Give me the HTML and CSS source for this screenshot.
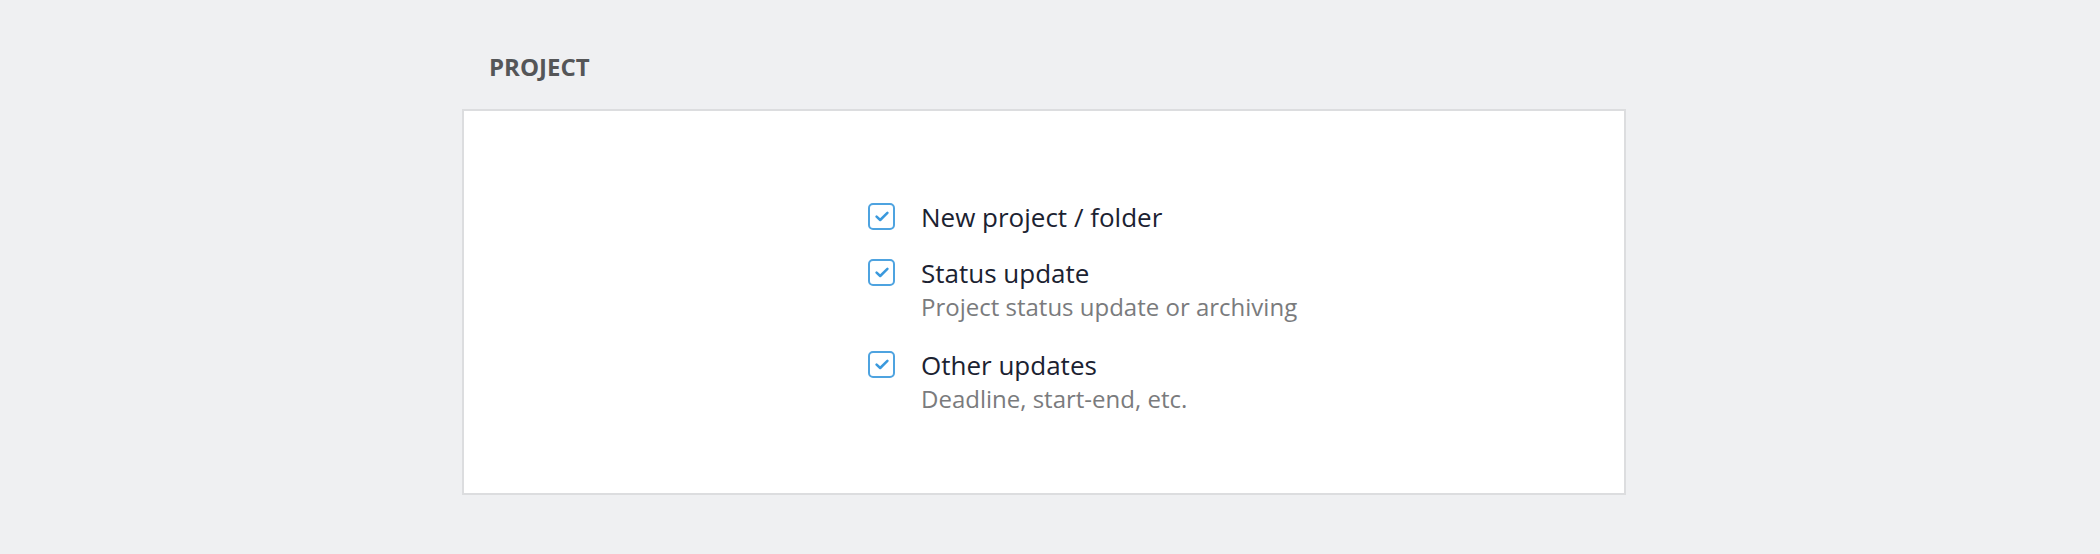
FILE: index.html
```html
<!DOCTYPE html>
<html lang="en">
<head>
    <meta charset="UTF-8">
    <title>Notifications - Project</title>
    <link rel="stylesheet" href="styles.css">
</head>
<body>
    <div class="section">
        <h2 class="section-title">PROJECT</h2>
        <div class="card">
            <ul class="option-list">
                <li class="option">
                    <span class="checkbox">
                        <svg viewBox="0 0 14 12" width="14" height="12"><path d="M1.6 5.6 L5.2 9 L12.4 1.8" fill="none" stroke="#3a99dd" stroke-width="2.5" stroke-linecap="round" stroke-linejoin="round"/></svg>
                    </span>
                    <div class="option-text">
                        <div class="option-title">New project / folder</div>
                    </div>
                </li>
                <li class="option">
                    <span class="checkbox">
                        <svg viewBox="0 0 14 12" width="14" height="12"><path d="M1.6 5.6 L5.2 9 L12.4 1.8" fill="none" stroke="#3a99dd" stroke-width="2.5" stroke-linecap="round" stroke-linejoin="round"/></svg>
                    </span>
                    <div class="option-text">
                        <div class="option-title">Status update</div>
                        <div class="option-desc">Project status update or archiving</div>
                    </div>
                </li>
                <li class="option">
                    <span class="checkbox">
                        <svg viewBox="0 0 14 12" width="14" height="12"><path d="M1.6 5.6 L5.2 9 L12.4 1.8" fill="none" stroke="#3a99dd" stroke-width="2.5" stroke-linecap="round" stroke-linejoin="round"/></svg>
                    </span>
                    <div class="option-text">
                        <div class="option-title">Other updates</div>
                        <div class="option-desc">Deadline, start-end, etc.</div>
                    </div>
                </li>
            </ul>
        </div>
    </div>
</body>
</html>
```

FILE: styles.css
```css
body {
    margin: 0;
    background-color: #eff0f2;
    font-family: 'Open Sans', 'Noto Sans', sans-serif;
    color: #1b2231;
}
.section {
    width: 1164px;
    margin-left: 462px;
    padding-top: 47px;
}
.section-title {
    margin: 0 0 22px 27px;
    font-size: 24px;
    line-height: 40px;
    font-weight: 700;
    color: #555658;
}
.card {
    background-color: white;
    border: 2px solid #dcdddf;
    padding: 88px 0 74px 404px;
}
.option-list {
    list-style: none;
    margin: 0;
    padding: 0;
    display: flex;
    flex-direction: column;
    gap: 20px;
}
.option {
    display: flex;
    align-items: flex-start;
    gap: 26px;
}
.checkbox {
    width: 27px;
    height: 27px;
    margin-top: 4px;
    padding-top: 1px;
    box-sizing: border-box;
    border: 2px solid #4ea3e0;
    border-radius: 5px;
    display: flex;
    align-items: center;
    justify-content: center;
}
.option-title {
    font-size: 26px;
    line-height: 36px;
}
.option-desc {
    font-size: 24px;
    line-height: 32px;
    margin-bottom: 4px;
    color: #7a7b7d;
}
```
